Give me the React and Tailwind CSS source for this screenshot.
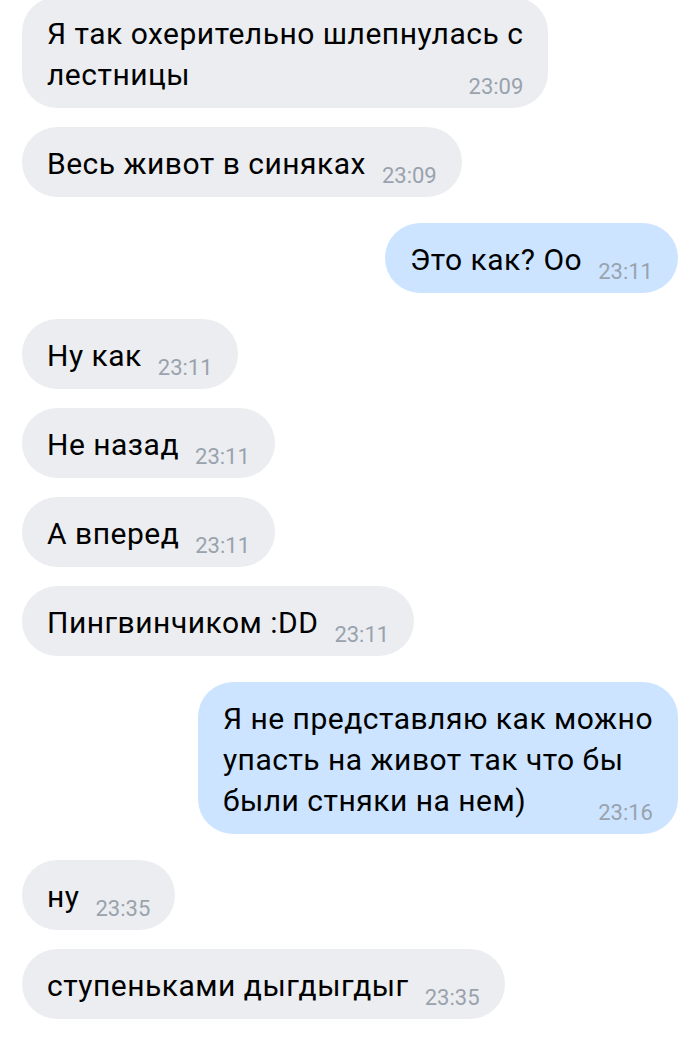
import React from "react";

// chat log: who sent it, the lines of text and the time
const messages = [
  { out: false, lines: ["Я так охерительно шлепнулась с", "лестницы"], time: "23:09" },
  { out: false, lines: ["Весь живот в синяках"], time: "23:09" },
  { out: true, lines: ["Это как? Оо"], time: "23:11" },
  { out: false, lines: ["Ну как"], time: "23:11" },
  { out: false, lines: ["Не назад"], time: "23:11" },
  { out: false, lines: ["А вперед"], time: "23:11" },
  { out: false, lines: ["Пингвинчиком :DD"], time: "23:11" },
  {
    out: true,
    lines: ["Я не представляю как можно", "упасть на живот так что бы", "были стняки на нем)"],
    time: "23:16",
  },
  { out: false, lines: ["ну"], time: "23:35" },
  { out: false, lines: ["ступеньками дыгдыгдыг"], time: "23:35" },
];

const Bubble = ({ msg }) => {
  return (
    <div
      className={
        "inline-block max-w-full rounded-[35px] pl-[25px] pr-[25px] pt-[16px] pb-[13px] text-[30px] leading-[41px] tracking-[0.5px] text-black " +
        (msg.out ? "bg-[#cce4ff]" : "bg-[#ebedf0]")
      }
    >
      {msg.lines.map((line, i) => (
        <React.Fragment key={i}>
          {i > 0 && <br />}
          {line}
        </React.Fragment>
      ))}
      {/* time sits on the last line, pushed to the right */}
      <span className="float-right ml-[16px] translate-y-[22px] text-[22px] leading-[22px] tracking-normal text-[#99a2ad]">
        {msg.time}
      </span>
    </div>
  );
};

export default function App() {
  return (
    <div
      className="min-h-[1048px] w-[700px] overflow-hidden bg-white px-[22px]"
      style={{ fontFamily: "Roboto, 'Noto Sans', sans-serif" }}
    >
      <div className="-mt-[3px] flex flex-col">
        {messages.map((msg, i) => {
          const prev = messages[i - 1];
          const gap = !prev ? "" : prev.out === msg.out ? "mt-[19px]" : "mt-[26px]";
          return (
            <div key={i} className={"flex " + gap + (msg.out ? " justify-end" : " justify-start")}>
              <Bubble msg={msg} />
            </div>
          );
        })}
      </div>
    </div>
  );
}
